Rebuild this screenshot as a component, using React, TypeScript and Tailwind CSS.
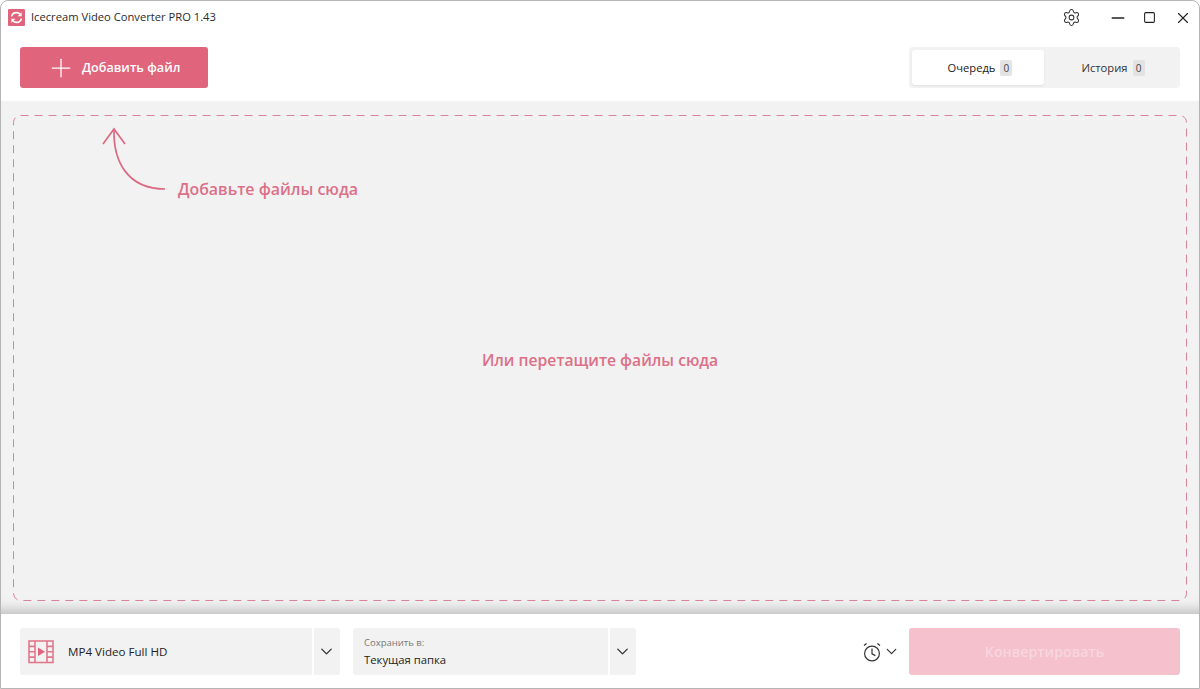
import { Plus, Settings, Minus, Square, X, ChevronDown } from 'lucide-react';

const font = "font-['Open_Sans','Noto_Sans','Liberation_Sans',sans-serif]";

function Logo() {
  return (
    <svg width="17" height="17" viewBox="0 0 17 17" className="shrink-0">
      <rect width="17" height="17" rx="1" fill="#e0647c" />
      <path d="M3.6 7.4C4.2 5 6.2 3.6 8.5 3.6c1.5 0 2.8.6 3.7 1.7" fill="none" stroke="#fff" strokeWidth="1.7" />
      <path d="M13.6 3.2v4h-4z" fill="#fff" />
      <path d="M13.4 9.6c-.6 2.4-2.6 3.8-4.9 3.8-1.5 0-2.8-.6-3.7-1.7" fill="none" stroke="#fff" strokeWidth="1.7" />
      <path d="M3.4 13.8v-4h4z" fill="#fff" />
    </svg>
  );
}

function FilmIcon() {
  return (
    <svg width="26" height="24" viewBox="0 0 26 24" fill="none" stroke="#e0788c" strokeWidth="1.6" className="shrink-0">
      <rect x="1" y="1" width="24" height="21.5" />
      <path d="M7 1v21.5M19 1v21.5M1 6.4h6M1 11.8h6M1 17.1h6M19 6.4h6M19 11.8h6M19 17.1h6" />
      <path d="M10 7.5l7 4.3-7 4.3z" fill="#e0647c" stroke="none" />
    </svg>
  );
}

function AlarmIcon() {
  return (
    <svg width="18" height="20" viewBox="0 0 18 20" fill="none" stroke="#333" strokeWidth="1.2" className="shrink-0">
      <circle cx="9" cy="11.5" r="7.4" />
      <path d="M9 6.6v5.2l3.4 1.8" />
      <path d="M1 3.6l2.6-2M17 3.6l-2.6-2" />
    </svg>
  );
}

function Badge({ n }: { n: number }) {
  return <span className="flex h-4 w-3 items-center justify-center rounded-[2px] bg-[#e3e3e3] text-[10px] text-[#444]">{n}</span>;
}

export default function App() {
  return (
    <div className={`${font} flex h-[689px] w-[1200px] flex-col overflow-hidden rounded-t-lg border border-[#b5b5b5] bg-white text-[#222]`}>
      <div className="flex h-[33px] shrink-0 items-center pl-[7px] pr-[7px]">
        <Logo />
        <span className="ml-[6px] text-[11.2px] text-[#2a2a2a]">Icecream Video Converter PRO 1.43</span>
        <Settings size={19} strokeWidth={1.3} className="ml-auto mr-[27px] text-[#333]" />
        <Minus size={20} strokeWidth={1.6} className="mr-[15px] text-[#222]" />
        <Square size={13} strokeWidth={2} className="mr-[18px] text-[#222]" />
        <X size={18} strokeWidth={1.5} className="text-[#222]" />
      </div>

      <div className="flex h-[67px] shrink-0 items-start justify-between pl-[19px] pr-[19px] pt-[13px]">
        <button className="flex h-[41px] w-[188px] items-center rounded-[3px] bg-[#e0647c] pl-[26px] text-white">
          <Plus size={30} strokeWidth={1} />
          <span className="ml-[6px] pt-[1px] text-[12.6px] font-semibold">Добавить файл</span>
        </button>
        <div className="flex h-[41px] w-[271px] rounded-[4px] bg-[#f2f2f2] p-[3px]">
          <div className="flex w-[132px] items-center justify-center gap-[5px] rounded-[3px] bg-white pl-[4px] pt-[1px] text-[11.2px] shadow-[0_1px_2px_rgba(0,0,0,0.08)]">
            Очередь <Badge n={0} />
          </div>
          <div className="flex flex-1 items-center justify-center gap-[5px] pl-[5px] pt-[1px] text-[11.2px] text-[#333]">
            История <Badge n={0} />
          </div>
        </div>
      </div>

      <div className="relative min-h-0 flex-1 bg-[#f2f2f2] shadow-[inset_0_-14px_12px_-10px_rgba(0,0,0,0.22)]">
        <svg className="absolute left-[12px] top-[14px]" width="1174" height="486" fill="none">
          <rect x="0.5" y="0.5" width="1173" height="485" rx="7" stroke="#d98398" strokeDasharray="8 6" />
        </svg>
        <svg className="absolute left-[99px] top-[25px]" width="68" height="66" viewBox="0 0 68 66" fill="none" stroke="#dc6a82" strokeWidth="1.7">
          <path d="M14 3C13 36 28 63 65 63" />
          <path d="M3 18L14 3l11 15" />
        </svg>
        <span className="absolute left-[177px] top-[77px] text-[15.9px] font-semibold text-[#dc7088]">Добавьте файлы сюда</span>
        <div className="flex h-full items-center justify-center pt-[7px]">
          <span className="text-[15.7px] font-semibold text-[#dc7088]">Или перетащите файлы сюда</span>
        </div>
      </div>

      <div className="flex h-[74px] shrink-0 items-start px-[19px] pt-[14px]">
        <div className="flex h-[47px] w-[320px] rounded-[3px] bg-[#f2f2f2]">
          <div className="flex flex-1 items-center border-r-2 border-white pl-[8px]">
            <FilmIcon />
            <span className="ml-[14px] text-[11.6px] text-[#222]">MP4 Video Full HD</span>
          </div>
          <div className="flex w-[26px] items-center justify-center pr-[2px]">
            <ChevronDown size={19} strokeWidth={1.7} className="text-[#333]" />
          </div>
        </div>
        <div className="ml-[13px] flex h-[47px] w-[283px] rounded-[3px] bg-[#f2f2f2]">
          <div className="flex flex-1 flex-col justify-center border-r-2 border-white pl-[11px]">
            <span className="text-[9.5px] leading-[13px] text-[#777]">Сохранить в:</span>
            <span className="mt-[3px] text-[11.3px] leading-[16px] text-[#222]">Текущая папка</span>
          </div>
          <div className="flex w-[26px] items-center justify-center pr-[2px]">
            <ChevronDown size={19} strokeWidth={1.7} className="text-[#333]" />
          </div>
        </div>
        <div className="ml-auto flex h-[47px] items-center">
          <AlarmIcon />
          <ChevronDown size={17} strokeWidth={1.7} className="ml-[2px] mr-[9px] text-[#333]" />
          <button className="h-[47px] w-[271px] rounded-[3px] bg-[#f4c1cd] text-[14.2px] font-semibold text-[#f8d6de]">Конвертировать</button>
        </div>
      </div>
    </div>
  );
}
